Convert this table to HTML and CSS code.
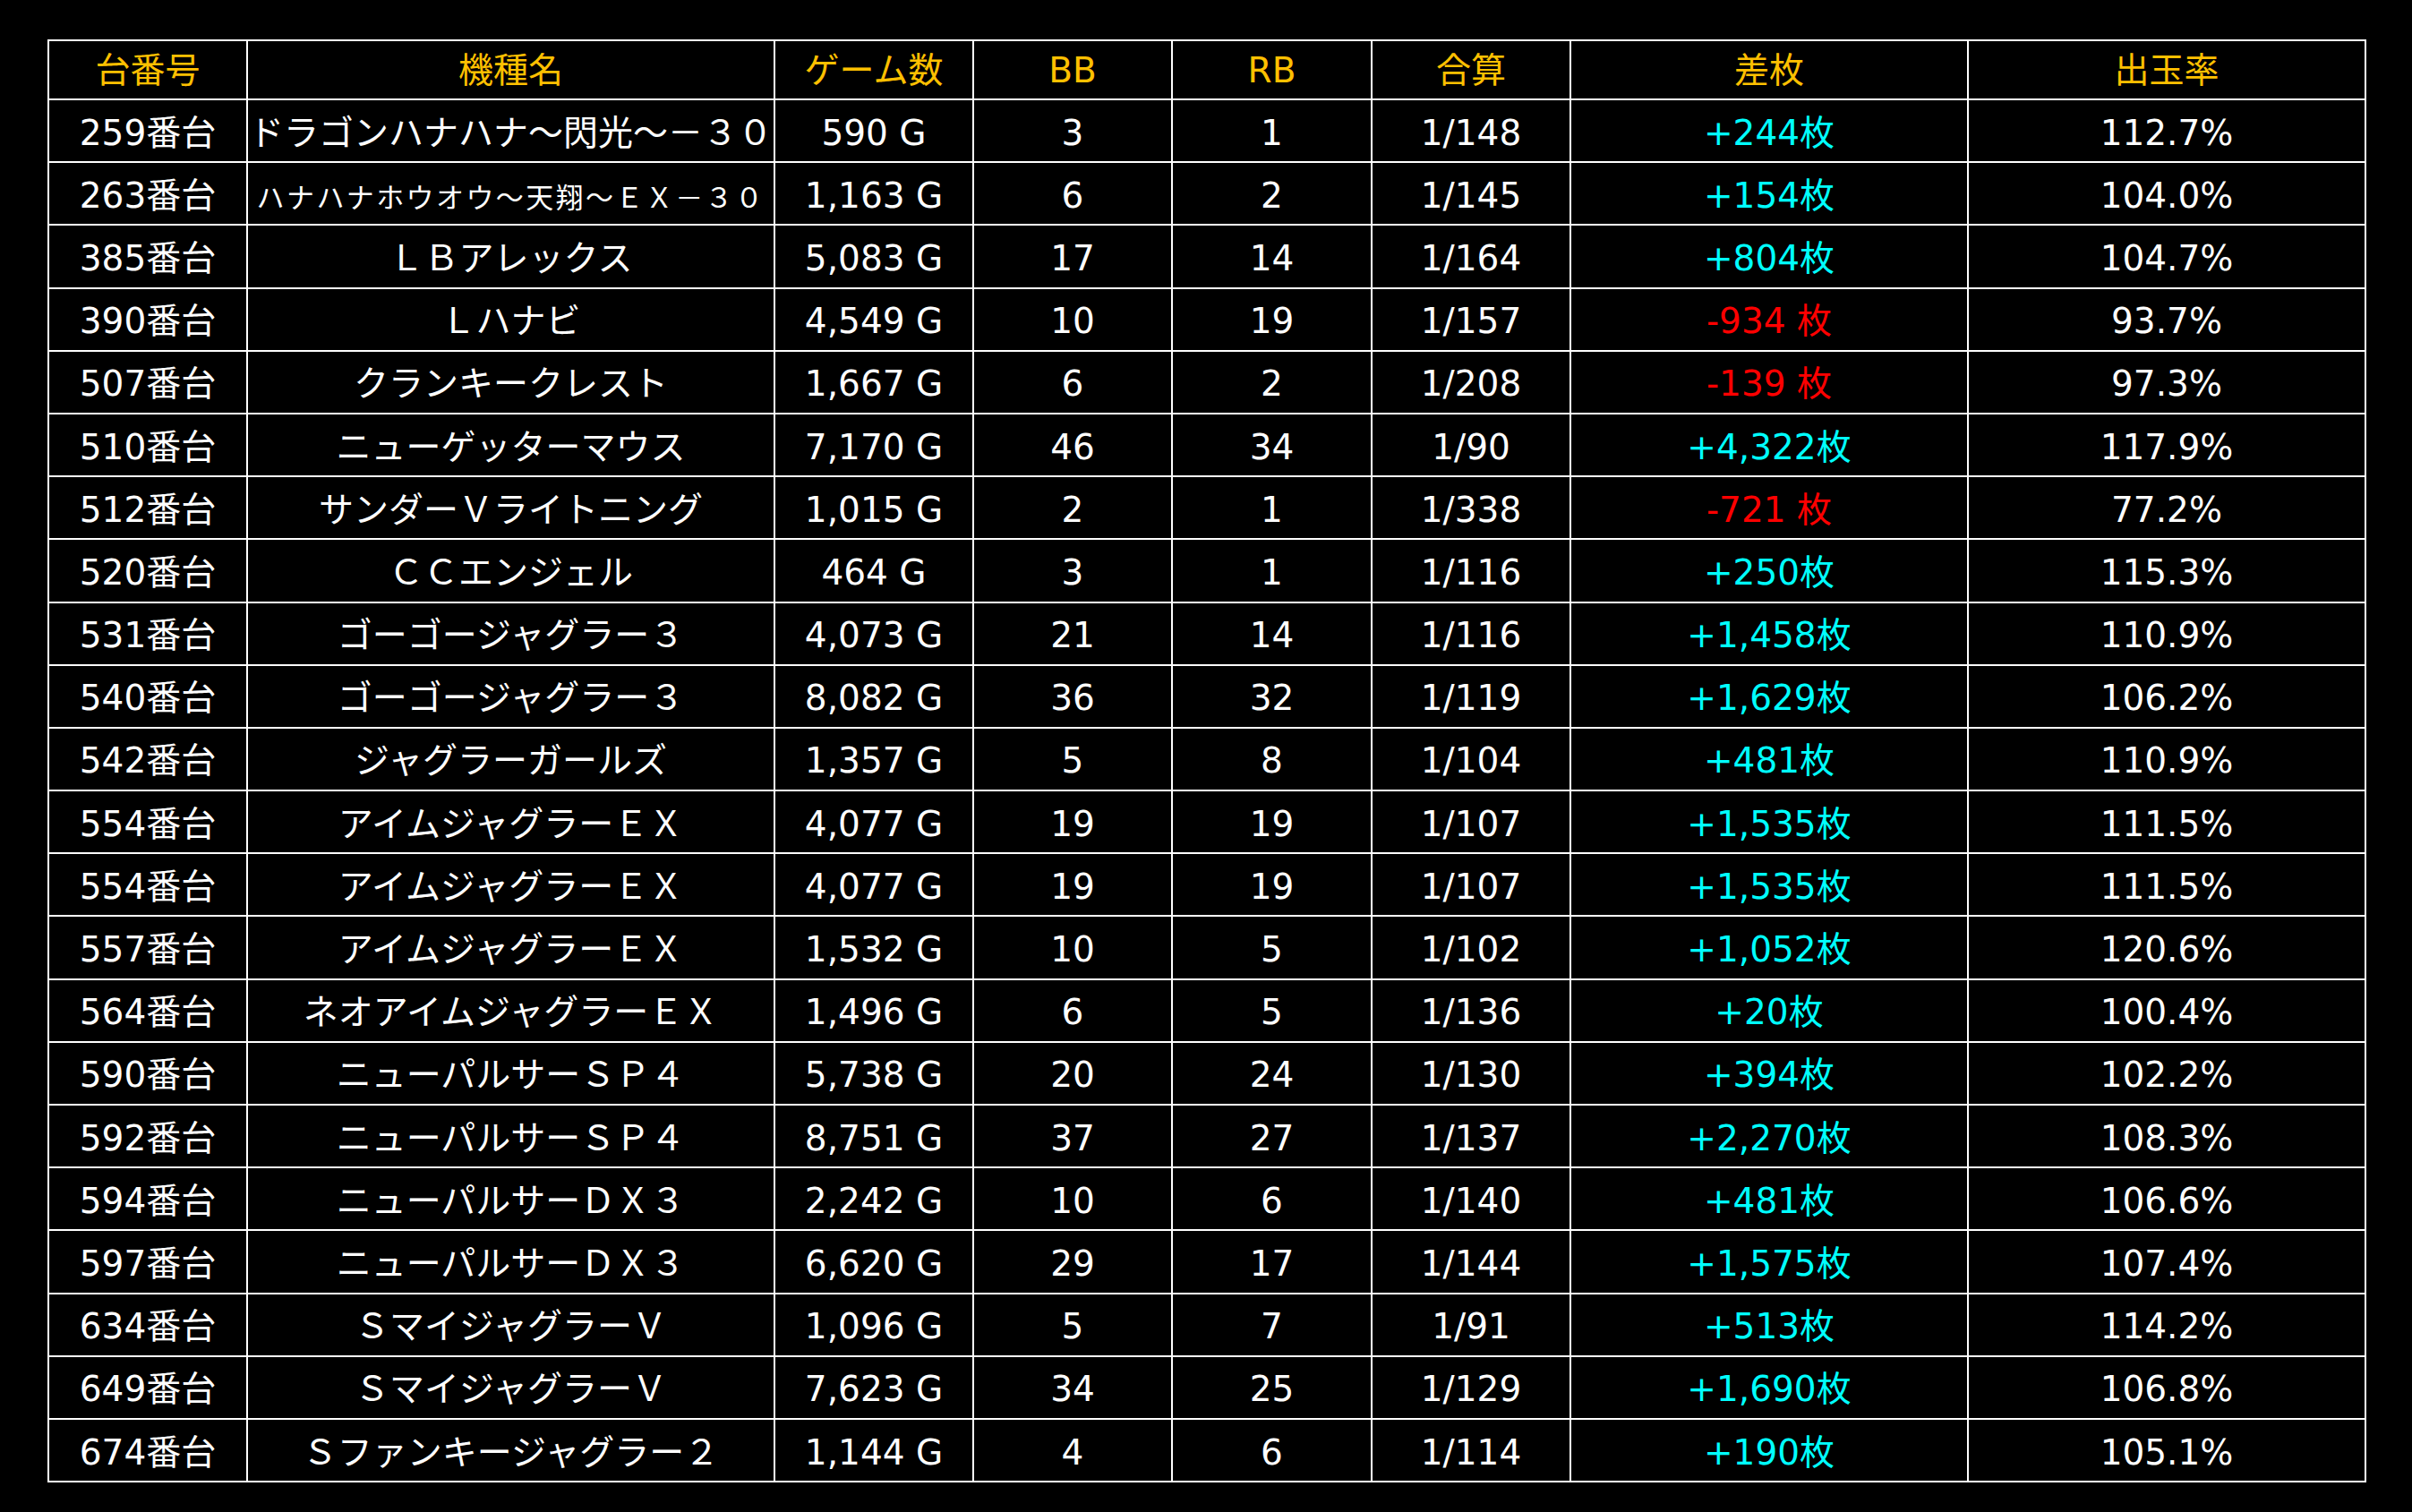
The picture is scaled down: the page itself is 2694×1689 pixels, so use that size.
FILE: index.html
```html
<!DOCTYPE html>
<html lang="ja">
<head>
<meta charset="utf-8">
<title>台番データ</title>
<link rel="stylesheet" href="styles.css">
</head>
<body>
<div class="page">
<table class="data">
<colgroup>
<col class="c-no"><col class="c-name"><col class="c-game"><col class="c-bb"><col class="c-rb"><col class="c-sum"><col class="c-diff"><col class="c-rate">
</colgroup>
<thead>
<tr><th>台番号</th><th>機種名</th><th>ゲーム数</th><th>BB</th><th>RB</th><th>合算</th><th>差枚</th><th>出玉率</th></tr>
</thead>
<tbody>
<tr><td>259番台</td><td>ドラゴンハナハナ～閃光～－３０</td><td>590 G</td><td>3</td><td>1</td><td>1/148</td><td class="plus">+244枚</td><td>112.7%</td></tr>
<tr><td>263番台</td><td><span class="tight">ハナハナホウオウ～天翔～ＥＸ－３０</span></td><td>1,163 G</td><td>6</td><td>2</td><td>1/145</td><td class="plus">+154枚</td><td>104.0%</td></tr>
<tr><td>385番台</td><td>ＬＢアレックス</td><td>5,083 G</td><td>17</td><td>14</td><td>1/164</td><td class="plus">+804枚</td><td>104.7%</td></tr>
<tr><td>390番台</td><td>Ｌハナビ</td><td>4,549 G</td><td>10</td><td>19</td><td>1/157</td><td class="minus">-934 枚</td><td>93.7%</td></tr>
<tr><td>507番台</td><td>クランキークレスト</td><td>1,667 G</td><td>6</td><td>2</td><td>1/208</td><td class="minus">-139 枚</td><td>97.3%</td></tr>
<tr><td>510番台</td><td>ニューゲッターマウス</td><td>7,170 G</td><td>46</td><td>34</td><td>1/90</td><td class="plus">+4,322枚</td><td>117.9%</td></tr>
<tr><td>512番台</td><td>サンダーＶライトニング</td><td>1,015 G</td><td>2</td><td>1</td><td>1/338</td><td class="minus">-721 枚</td><td>77.2%</td></tr>
<tr><td>520番台</td><td>ＣＣエンジェル</td><td>464 G</td><td>3</td><td>1</td><td>1/116</td><td class="plus">+250枚</td><td>115.3%</td></tr>
<tr><td>531番台</td><td>ゴーゴージャグラー３</td><td>4,073 G</td><td>21</td><td>14</td><td>1/116</td><td class="plus">+1,458枚</td><td>110.9%</td></tr>
<tr><td>540番台</td><td>ゴーゴージャグラー３</td><td>8,082 G</td><td>36</td><td>32</td><td>1/119</td><td class="plus">+1,629枚</td><td>106.2%</td></tr>
<tr><td>542番台</td><td>ジャグラーガールズ</td><td>1,357 G</td><td>5</td><td>8</td><td>1/104</td><td class="plus">+481枚</td><td>110.9%</td></tr>
<tr><td>554番台</td><td>アイムジャグラーＥＸ</td><td>4,077 G</td><td>19</td><td>19</td><td>1/107</td><td class="plus">+1,535枚</td><td>111.5%</td></tr>
<tr><td>554番台</td><td>アイムジャグラーＥＸ</td><td>4,077 G</td><td>19</td><td>19</td><td>1/107</td><td class="plus">+1,535枚</td><td>111.5%</td></tr>
<tr><td>557番台</td><td>アイムジャグラーＥＸ</td><td>1,532 G</td><td>10</td><td>5</td><td>1/102</td><td class="plus">+1,052枚</td><td>120.6%</td></tr>
<tr><td>564番台</td><td>ネオアイムジャグラーＥＸ</td><td>1,496 G</td><td>6</td><td>5</td><td>1/136</td><td class="plus">+20枚</td><td>100.4%</td></tr>
<tr><td>590番台</td><td>ニューパルサーＳＰ４</td><td>5,738 G</td><td>20</td><td>24</td><td>1/130</td><td class="plus">+394枚</td><td>102.2%</td></tr>
<tr><td>592番台</td><td>ニューパルサーＳＰ４</td><td>8,751 G</td><td>37</td><td>27</td><td>1/137</td><td class="plus">+2,270枚</td><td>108.3%</td></tr>
<tr><td>594番台</td><td>ニューパルサーＤＸ３</td><td>2,242 G</td><td>10</td><td>6</td><td>1/140</td><td class="plus">+481枚</td><td>106.6%</td></tr>
<tr><td>597番台</td><td>ニューパルサーＤＸ３</td><td>6,620 G</td><td>29</td><td>17</td><td>1/144</td><td class="plus">+1,575枚</td><td>107.4%</td></tr>
<tr><td>634番台</td><td>ＳマイジャグラーＶ</td><td>1,096 G</td><td>5</td><td>7</td><td>1/91</td><td class="plus">+513枚</td><td>114.2%</td></tr>
<tr><td>649番台</td><td>ＳマイジャグラーＶ</td><td>7,623 G</td><td>34</td><td>25</td><td>1/129</td><td class="plus">+1,690枚</td><td>106.8%</td></tr>
<tr><td>674番台</td><td>Ｓファンキージャグラー２</td><td>1,144 G</td><td>4</td><td>6</td><td>1/114</td><td class="plus">+190枚</td><td>105.1%</td></tr>
</tbody>
</table>
</div>
</body>
</html>
```
FILE: styles.css
```css
html, body {
  margin: 0;
  padding: 0;
  background: #000;
}
body {
  width: 2694px;
  height: 1689px;
  overflow: hidden;
  font-family: "DejaVu Sans", "Noto Sans CJK JP", sans-serif;
  color: #fff;
}
.page {
  padding: 44px 0 0 53px;
}
.data {
  border-collapse: collapse;
  table-layout: fixed;
  width: 2590px;
  font-size: 39px;
}
.c-no { width: 222px; }
.c-name { width: 589px; }
.c-game { width: 222px; }
.c-bb { width: 222px; }
.c-rb { width: 223px; }
.c-sum { width: 222px; }
.c-diff { width: 444px; }
.c-rate { width: 444px; }
.data th, .data td {
  border: 2px solid #fff;
  padding: 0;
  text-align: center;
  vertical-align: middle;
  white-space: nowrap;
  overflow: visible;
  line-height: 1;
}
.data th {
  color: #ffc000;
  font-weight: normal;
  height: 64px;
}
.data td {
  padding-top: 4px;
  height: 64.2px;
}
.plus {
  color: #00ffff;
  padding-right: 6px;
}
.minus {
  color: #ff0000;
  padding-right: 6px;
}
.tight {
  font-size: 31px;
  letter-spacing: 2.4px;
}
```
